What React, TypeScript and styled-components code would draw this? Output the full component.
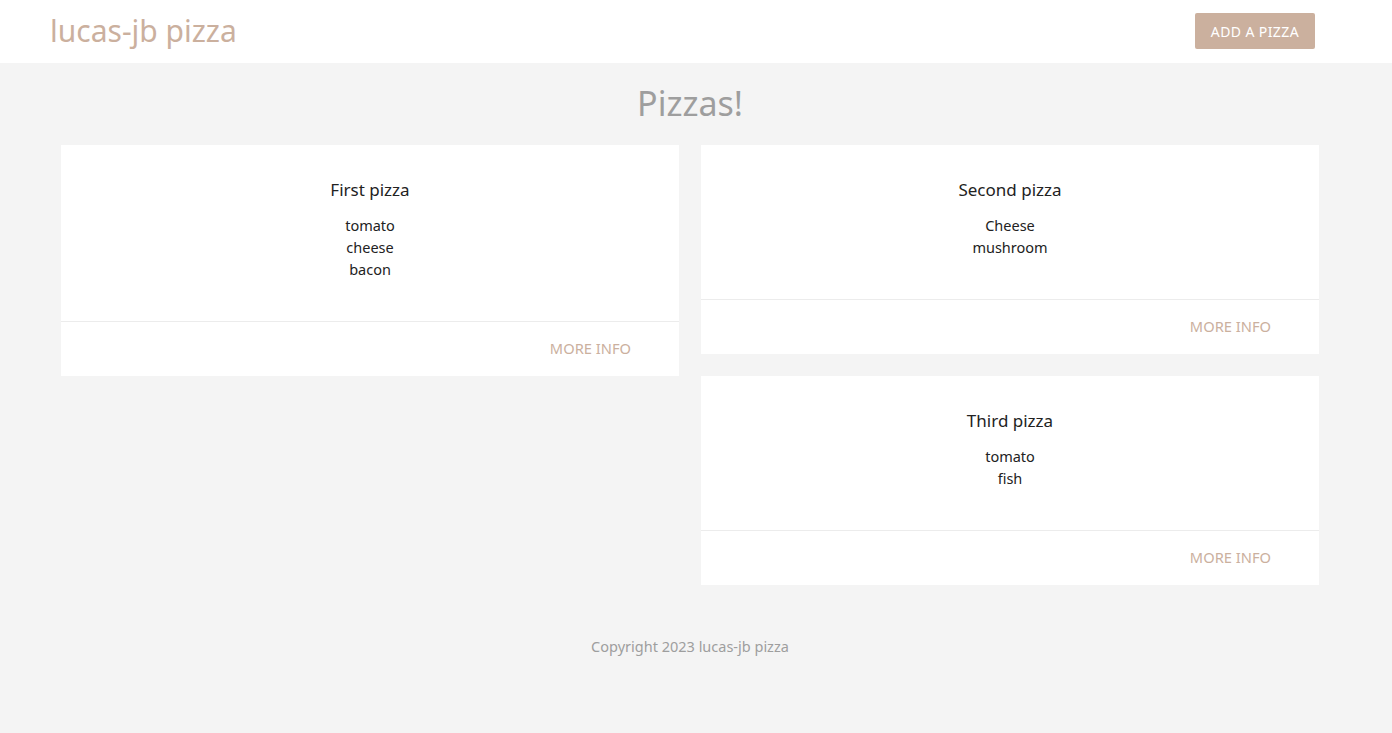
import React from "react";
import styled, { createGlobalStyle } from "styled-components";

const GlobalStyle = createGlobalStyle`
  html, body { margin: 0; padding: 0; }
  body {
    background: #f4f4f4;
    font-family: "Noto Sans", "Open Sans", sans-serif;
    color: rgba(0,0,0,0.87);
    min-height: 100vh;
  }
`;

const Header = styled.header`
  height: 63px;
  background: #ffffff;
  display: flex;
  align-items: center;
  justify-content: space-between;
  padding: 0 77px 0 50px;
  box-sizing: border-box;
`;

const Logo = styled.a`
  font-size: 30px;
  color: #cbb09e;
  text-decoration: none;
  line-height: 1;
  margin-top: -2px;
`;

const AddButton = styled.button`
  height: 36px;
  padding: 0 16px;
  border: none;
  border-radius: 2px;
  background: #cbb09e;
  color: #ffffff;
  font-family: inherit;
  font-size: 14px;
  letter-spacing: 0.4px;
  text-transform: uppercase;
  margin-top: -1px;
`;

const Main = styled.main`
  padding: 0 73px 0 61px;
`;

const Title = styled.h1`
  margin: 0;
  height: 82px;
  display: flex;
  align-items: center;
  justify-content: center;
  font-size: 34px;
  font-weight: 400;
  color: #9e9e9e;
  padding-bottom: 2px;
  box-sizing: border-box;
`;

const Grid = styled.div`
  display: grid;
  grid-template-columns: 1fr 1fr;
  gap: 22px;
  align-items: start;
`;

const Column = styled.div`
  display: flex;
  flex-direction: column;
  gap: 22px;
`;

const Card = styled.div`
  background: #ffffff;
`;

const CardContent = styled.div`
  padding: 24px 24px 41px;
  text-align: center;
`;

const CardTitle = styled.h3`
  margin: 7px 0 11px;
  font-size: 17px;
  font-weight: 400;
  line-height: 27px;
  color: #222;
`;

const Ingredient = styled.p`
  margin: 0;
  font-size: 14.5px;
  line-height: 22px;
  color: #222;
`;

const CardAction = styled.div`
  border-top: 1px solid #ececec;
  padding: 15px 48px 17px 24px;
  display: flex;
  justify-content: flex-end;
`;

const MoreInfo = styled.a`
  font-size: 14.7px;
  line-height: 22px;
  color: #cbb09e;
  text-transform: uppercase;
  text-decoration: none;
`;

const Footer = styled.footer`
  text-align: center;
  padding: 51px 0 80px;
  font-size: 14.5px;
  color: #9e9e9e;
  margin-right: 12px;
`;

type Pizza = { name: string; ingredients: string[] };

const PizzaCard = ({ pizza }: { pizza: Pizza }) => (
  <Card>
    <CardContent>
      <CardTitle>{pizza.name}</CardTitle>
      {pizza.ingredients.map((i) => (
        <Ingredient key={i}>{i}</Ingredient>
      ))}
    </CardContent>
    <CardAction>
      <MoreInfo href="#">More info</MoreInfo>
    </CardAction>
  </Card>
);

const pizzas: Pizza[] = [
  { name: "First pizza", ingredients: ["tomato", "cheese", "bacon"] },
  { name: "Second pizza", ingredients: ["Cheese", "mushroom"] },
  { name: "Third pizza", ingredients: ["tomato", "fish"] },
];

export default function App() {
  return (
    <>
      <GlobalStyle />
      <Header>
        <Logo href="#">lucas-jb pizza</Logo>
        <AddButton>Add a pizza</AddButton>
      </Header>
      <Main>
        <Title>Pizzas!</Title>
        <Grid>
          <Column>
            <PizzaCard pizza={pizzas[0]} />
          </Column>
          <Column>
            <PizzaCard pizza={pizzas[1]} />
            <PizzaCard pizza={pizzas[2]} />
          </Column>
        </Grid>
      </Main>
      <Footer>Copyright 2023 lucas-jb pizza</Footer>
    </>
  );
}
